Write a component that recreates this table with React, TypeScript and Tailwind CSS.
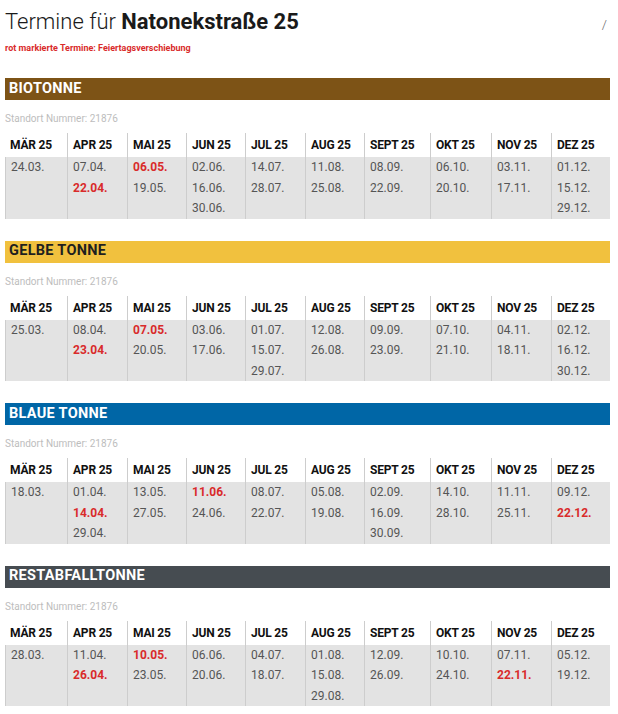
import React from "react";

type Bin = {
  name: string;
  bar: string;
  text: string;
  months: string[][];
};

const MONTHS = ["MÄR 25", "APR 25", "MAI 25", "JUN 25", "JUL 25", "AUG 25", "SEPT 25", "OKT 25", "NOV 25", "DEZ 25"];

// "!" marks a date moved because of a holiday (shown in red)
const BINS: Bin[] = [
  {
    name: "BIOTONNE",
    bar: "bg-[#7d5316]",
    text: "text-white",
    months: [
      ["24.03."],
      ["07.04.", "!22.04."],
      ["!06.05.", "19.05."],
      ["02.06.", "16.06.", "30.06."],
      ["14.07.", "28.07."],
      ["11.08.", "25.08."],
      ["08.09.", "22.09."],
      ["06.10.", "20.10."],
      ["03.11.", "17.11."],
      ["01.12.", "15.12.", "29.12."],
    ],
  },
  {
    name: "GELBE TONNE",
    bar: "bg-[#f1c13e]",
    text: "text-[#1f1f1f]",
    months: [
      ["25.03."],
      ["08.04.", "!23.04."],
      ["!07.05.", "20.05."],
      ["03.06.", "17.06."],
      ["01.07.", "15.07.", "29.07."],
      ["12.08.", "26.08."],
      ["09.09.", "23.09."],
      ["07.10.", "21.10."],
      ["04.11.", "18.11."],
      ["02.12.", "16.12.", "30.12."],
    ],
  },
  {
    name: "BLAUE TONNE",
    bar: "bg-[#0066a6]",
    text: "text-white",
    months: [
      ["18.03."],
      ["01.04.", "!14.04.", "29.04."],
      ["13.05.", "27.05."],
      ["!11.06.", "24.06."],
      ["08.07.", "22.07."],
      ["05.08.", "19.08."],
      ["02.09.", "16.09.", "30.09."],
      ["14.10.", "28.10."],
      ["11.11.", "25.11."],
      ["09.12.", "!22.12."],
    ],
  },
  {
    name: "RESTABFALLTONNE",
    bar: "bg-[#464c51]",
    text: "text-white",
    months: [
      ["28.03."],
      ["11.04.", "!26.04."],
      ["!10.05.", "23.05."],
      ["06.06.", "20.06."],
      ["04.07.", "18.07."],
      ["01.08.", "15.08.", "29.08."],
      ["12.09.", "26.09."],
      ["10.10.", "24.10."],
      ["07.11.", "!22.11."],
      ["05.12.", "19.12."],
    ],
  },
];

const BinTable = ({ bin }: { bin: Bin }) => (
  <section className="mb-[22px]">
    <div className={`h-[22px] px-[4px] flex items-center text-[14.5px] font-bold tracking-[0.3px] leading-none ${bin.bar} ${bin.text}`}>
      {bin.name}
    </div>
    <p className="mt-[12px] mb-[7px] text-[10px] leading-[14px] text-[#bdbdbd]">Standort Nummer: 21876</p>
    <div className="grid grid-cols-[62px_60px_59px_59px_60px_59px_66px_61px_60px_59px]">
      {MONTHS.map((m, i) => (
        <div key={m} className={`flex flex-col ${i > 0 ? "border-l border-[#cdcdcd]" : ""}`}>
          <div className="h-[24px] px-[5px] flex items-center text-[12px] font-bold text-[#111] tracking-[-0.2px]">{m}</div>
          <div
            className={`flex-1 bg-[#e3e3e3] px-[5px] text-[12px] leading-[20.5px] ${
              i === 0 ? "border-l border-[#cdcdcd]" : ""
            }`}
          >
            {bin.months[i].map((d) =>
              d.startsWith("!") ? (
                <div key={d} className="font-bold text-[#d92b2b]">
                  {d.slice(1)}
                </div>
              ) : (
                <div key={d} className="text-[#555]">
                  {d}
                </div>
              )
            )}
          </div>
        </div>
      ))}
    </div>
  </section>
);

export default function App() {
  return (
    <div className="w-[618px] min-h-[714px] bg-white pl-[5px] pt-[8px] font-['Roboto',sans-serif]">
      <div className="w-[605px]">
        <div className="flex items-baseline justify-between pr-[3px]">
          <h1 className="text-[22px] leading-[28px] text-[#1a1a1a]">
            <span className="font-light">Termine für </span>
            <span className="font-bold">Natonekstraße 25</span>
          </h1>
          <span className="text-[13px] font-light text-[#666]">/</span>
        </div>
        <p className="mt-[5px] text-[9px] font-bold text-[#d92b2b] leading-[14px]">
          rot markierte Termine: Feiertagsverschiebung
        </p>
        <div className="mt-[23px]">
          {BINS.map((b) => (
            <BinTable key={b.name} bin={b} />
          ))}
        </div>
      </div>
    </div>
  );
}
